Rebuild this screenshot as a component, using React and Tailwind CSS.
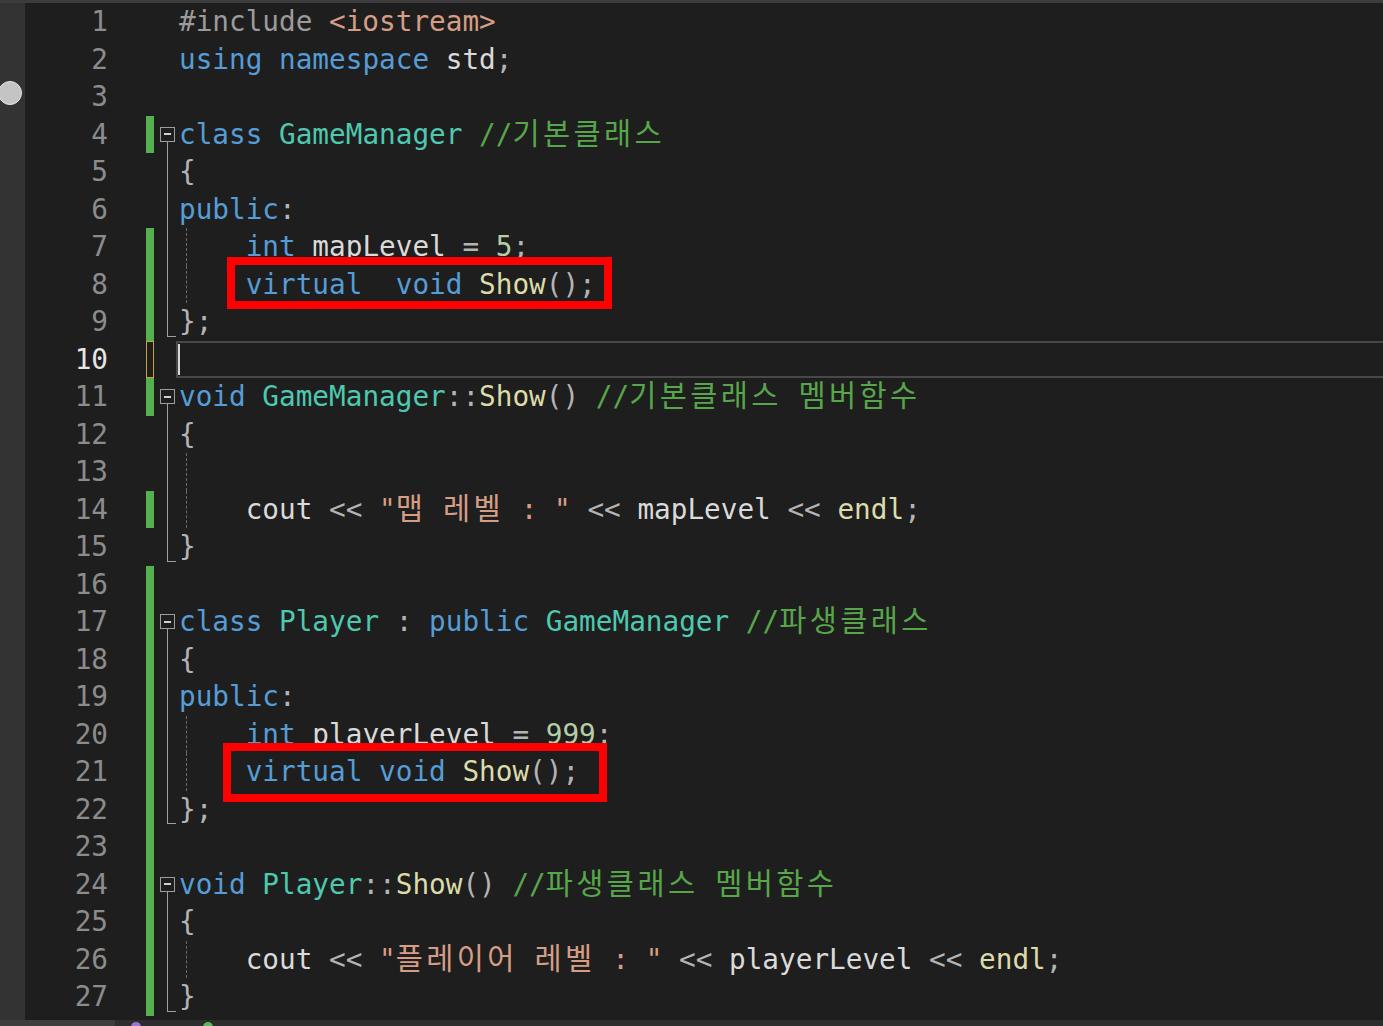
import React from "react";

// 토큰 색상 (Visual Studio 다크 테마)
const tone = {
  kw: "text-[#569cd6]",
  ty: "text-[#4ec9b0]",
  fn: "text-[#dcdcaa]",
  str: "text-[#d69d85]",
  cm: "text-[#57a64a]",
  num: "text-[#b5cea8]",
  tx: "text-[#dadada]",
  op: "text-[#b4b4b4]",
  pp: "text-[#9b9b9b]",
};

const lines = [
  [["pp", "#include "], ["str", "<iostream>"]],
  [["kw", "using"], ["tx", " "], ["kw", "namespace"], ["tx", " std"], ["op", ";"]],
  [],
  [["kw", "class"], ["tx", " "], ["ty", "GameManager"], ["tx", " "], ["cm", "//기본클래스"]],
  [["op", "{"]],
  [["kw", "public"], ["op", ":"]],
  [["tx", "    "], ["kw", "int"], ["tx", " mapLevel "], ["op", "="], ["tx", " "], ["num", "5"], ["op", ";"]],
  [["tx", "    "], ["kw", "virtual"], ["tx", "  "], ["kw", "void"], ["tx", " "], ["fn", "Show"], ["op", "();"]],
  [["op", "};"]],
  [],
  [["kw", "void"], ["tx", " "], ["ty", "GameManager"], ["op", "::"], ["fn", "Show"], ["op", "()"], ["tx", " "], ["cm", "//기본클래스 멤버함수"]],
  [["op", "{"]],
  [],
  [["tx", "    cout "], ["op", "<<"], ["tx", " "], ["str", "\"맵 레벨 : \""], ["tx", " "], ["op", "<<"], ["tx", " mapLevel "], ["op", "<<"], ["tx", " "], ["fn", "endl"], ["op", ";"]],
  [["op", "}"]],
  [],
  [["kw", "class"], ["tx", " "], ["ty", "Player"], ["tx", " "], ["op", ":"], ["tx", " "], ["kw", "public"], ["tx", " "], ["ty", "GameManager"], ["tx", " "], ["cm", "//파생클래스"]],
  [["op", "{"]],
  [["kw", "public"], ["op", ":"]],
  [["tx", "    "], ["kw", "int"], ["tx", " playerLevel "], ["op", "="], ["tx", " "], ["num", "999"], ["op", ";"]],
  [["tx", "    "], ["kw", "virtual"], ["tx", " "], ["kw", "void"], ["tx", " "], ["fn", "Show"], ["op", "();"]],
  [["op", "};"]],
  [],
  [["kw", "void"], ["tx", " "], ["ty", "Player"], ["op", "::"], ["fn", "Show"], ["op", "()"], ["tx", " "], ["cm", "//파생클래스 멤버함수"]],
  [["op", "{"]],
  [["tx", "    cout "], ["op", "<<"], ["tx", " "], ["str", "\"플레이어 레벨 : \""], ["tx", " "], ["op", "<<"], ["tx", " playerLevel "], ["op", "<<"], ["tx", " "], ["fn", "endl"], ["op", ";"]],
  [["op", "}"]],
];

const changed = { 4: "g", 7: "g", 8: "g", 9: "g", 10: "y", 11: "g", 14: "g" };
for (let n = 16; n <= 27; n++) changed[n] = "g";

const folds = {};
[4, 11, 17, 24].forEach((n) => (folds[n] = "box"));
[5, 6, 7, 8, 12, 13, 14, 18, 19, 20, 21, 25, 26].forEach((n) => (folds[n] = "line"));
[9, 15, 22, 27].forEach((n) => (folds[n] = "end"));

const guides = [7, 8, 13, 14, 20, 21, 26];

// 한글은 폭이 넓어서 자간을 조금 더 준다
const hangul = (text) =>
  text.split(/([\uac00-\ud7a3]+)/).map((part, i) =>
    /[\uac00-\ud7a3]/.test(part) ? (
      <span key={i} className="text-[29.5px] tracking-[3.4px]">{part}</span>
    ) : (
      part
    )
  );

const Fold = ({ kind }) => {
  if (kind === "box")
    return (
      <div className="flex h-full w-[22px] flex-col pl-[6px]">
        <div className="flex-1" />
        <div className="flex h-[15px] w-[15px] items-center justify-center border border-[#9d9d9d] bg-[#1e1e1e]">
          <div className="h-[2px] w-[7px] bg-[#d0d0d0]" />
        </div>
        <div className="ml-[7px] flex-1 border-l border-[#a0a0a0]" />
      </div>
    );
  if (kind === "line")
    return (
      <div className="h-full w-[22px]">
        <div className="ml-[13px] h-full border-l border-[#a0a0a0]" />
      </div>
    );
  if (kind === "end")
    return (
      <div className="h-full w-[22px]">
        <div className="ml-[13px] h-[calc(100%-4px)] w-[9px] border-b border-l border-[#a0a0a0]" />
      </div>
    );
  return <div className="h-full w-[22px]" />;
};

const Row = ({ n, tokens }) => {
  const mark = changed[n];
  const current = n === 10;
  return (
    <div className="flex h-[37.5px] items-stretch">
      <div className={`w-[83px] text-right ${current ? "text-[#e6e6e6]" : "text-[#8c8c8c]"}`}>{n}</div>
      <div className="w-[38px]" />
      <div className="w-[8px]">
        {mark === "g" && <div className="h-full bg-[#55b14f]" />}
        {mark === "y" && <div className="h-full border-[1.5px] border-[#c9a23a] bg-[#1e1e1e]" />}
      </div>
      <Fold kind={folds[n]} />
      {current ? (
        <div className="flex flex-1 items-stretch border-y-2 border-l-2 border-[#484848]">
          <div className="my-[1px] w-[2px] bg-[#d8d8d8]" />
        </div>
      ) : (
        <div className="relative flex-1 whitespace-pre pl-[3px]">
          {guides.includes(n) && (
            <div className="absolute bottom-0 left-[10px] top-0 border-l border-dashed border-[#6a6a6a]" />
          )}
          {tokens.map(([t, s], i) => (
            <span key={i} className={tone[t]}>{hangul(s)}</span>
          ))}
        </div>
      )}
    </div>
  );
};

export default function App() {
  return (
    <div className="flex h-[1026px] w-[1383px] flex-col overflow-hidden bg-[#1e1e1e] font-['DejaVu_Sans_Mono','Noto_Sans_CJK_KR',monospace] text-[27.7px] leading-[37.5px]">
      <div className="h-[3px] bg-[#3c3c3c]" />

      <div className="relative flex h-[1017px]">
        <div className="w-[25px] shrink-0 bg-[#333333] pt-[78px]">
          <div className="-ml-[2px] h-[24px] w-[24px] rounded-full border border-[#e6e6e6] bg-[#c4c4c4]" />
        </div>
        <div className="flex flex-1 flex-col">
          {lines.map((tokens, i) => (
            <Row key={i} n={i + 1} tokens={tokens} />
          ))}
        </div>

        {/* 빨간 강조 박스 */}
        <div className="absolute left-[227px] top-[254px] h-[52px] w-[385px] border-[8px] border-[#ff0000]" />
        <div className="absolute left-[223px] top-[740px] h-[59px] w-[384px] border-[8px] border-[#ff0000]" />
      </div>

      <div className="flex h-[6px]">
        <div className="w-[115px] bg-[#3d3d3d]" />
        <div className="flex flex-1 gap-[62px] bg-[#2d2d2d] pl-[16px] pt-[2px]">
          <div className="h-[10px] w-[10px] rounded-full bg-[#9f75d3]" />
          <div className="h-[10px] w-[10px] rounded-full bg-[#5fb85f]" />
        </div>
      </div>
    </div>
  );
}
